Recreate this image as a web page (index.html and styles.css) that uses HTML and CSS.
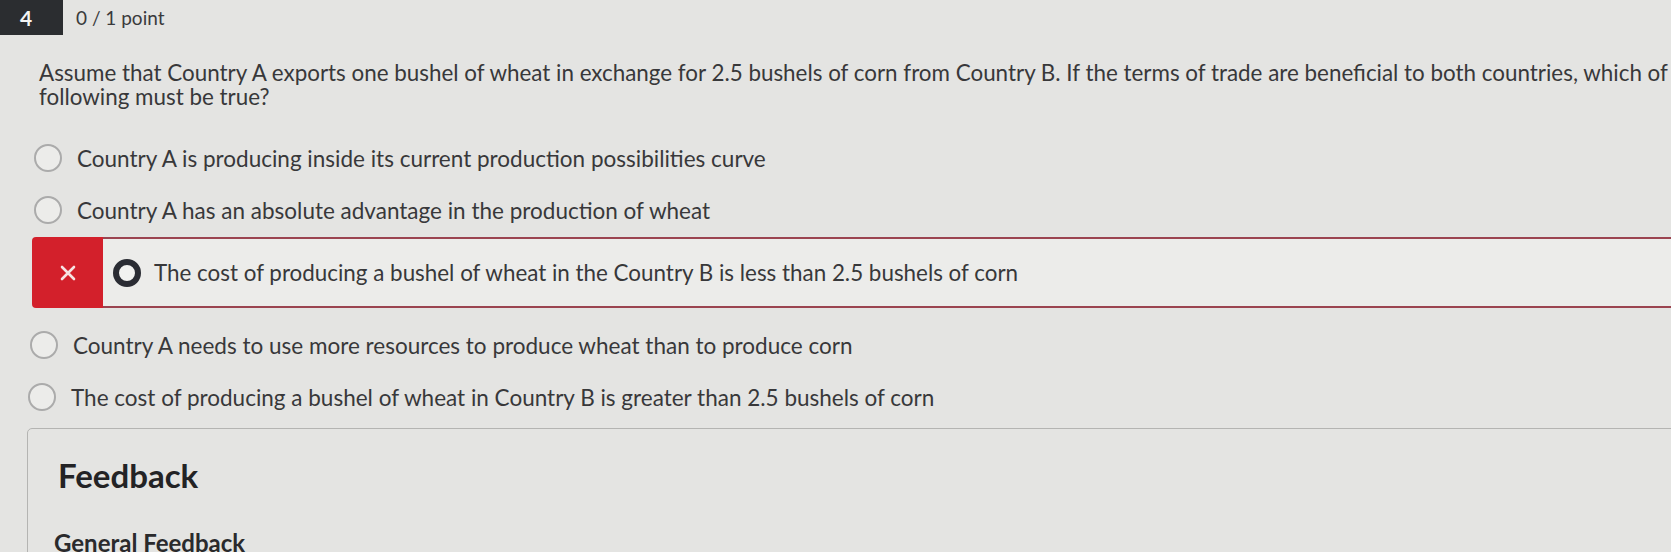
FILE: index.html
```html
<!DOCTYPE html>
<html lang="en">
<head>
<meta charset="utf-8">
<title>Question 4</title>
<link rel="stylesheet" href="styles.css">
</head>
<body>
<div class="page">
  <header class="qhead">
    <div class="qnum">4</div>
    <div class="qpoints">0 / 1 point</div>
  </header>
  <p class="qtext">Assume that Country A exports one bushel of wheat in exchange for 2.5 bushels of corn from Country B. If the terms of trade are beneficial to both countries, which of the following must be true?</p>
  <div class="options">
    <div class="opt opt-1"><span class="radio"></span><span class="label">Country A is producing inside its current production possibilities curve</span></div>
    <div class="opt opt-2"><span class="radio"></span><span class="label">Country A has an absolute advantage in the production of wheat</span></div>
    <div class="opt-wrong">
      <div class="mark"><svg width="16" height="16" viewBox="0 0 16 16"><path d="M2 2 L14 14 M14 2 L2 14" stroke="#f7e3e3" stroke-width="2.6" stroke-linecap="round"/></svg></div>
      <div class="wrong-body"><span class="radio radio-on"></span><span class="label">The cost of producing a bushel of wheat in the Country B is less than 2.5 bushels of corn</span></div>
    </div>
    <div class="opt opt-4"><span class="radio"></span><span class="label">Country A needs to use more resources to produce wheat than to produce corn</span></div>
    <div class="opt opt-5"><span class="radio"></span><span class="label">The cost of producing a bushel of wheat in Country B is greater than 2.5 bushels of corn</span></div>
  </div>
  <section class="feedback">
    <h2 class="fb-title">Feedback</h2>
    <h3 class="fb-sub">General Feedback</h3>
  </section>
</div>
</body>
</html>
```

FILE: styles.css
```css
html, body {
  margin: 0;
  padding: 0;
  background: #e4e4e2;
  overflow: hidden;
}
body {
  width: 1671px;
  height: 552px;
  font-family: Lato, "Open Sans", sans-serif;
  color: #38383a;
}
.page {
  width: 1760px;
}
.qhead {
  display: flex;
  align-items: center;
  height: 35px;
}
.qnum {
  width: 63px;
  height: 35px;
  background: #2b2d30;
  color: #f4f4f4;
  font-weight: 700;
  font-size: 21px;
  line-height: 35px;
  padding-left: 20px;
  box-sizing: border-box;
}
.qpoints {
  margin-left: 13px;
  font-size: 19px;
  color: #3a3a3c;
}
.qtext {
  margin: 26px 0 0 39px;
  width: 1720px;
  font-size: 22.4px;
  line-height: 24px;
  color: #38383a;
}
.options {
  display: flex;
  flex-direction: column;
  margin-top: 24px;
}
.opt {
  display: flex;
  align-items: center;
  height: 50px;
  padding-left: 34px;
  font-size: 22.5px;
}
.opt-2 { margin-top: 2px; }
.opt-4 { margin-top: 12px; padding-left: 30px; }
.opt-5 { margin-top: 2px; padding-left: 28px; }
.radio {
  width: 24px;
  height: 24px;
  border: 2px solid #ababab;
  border-radius: 50%;
  background: #ececea;
  flex: none;
  margin-right: 15px;
}
.radio-on {
  width: 16px;
  height: 16px;
  border: 6px solid #2a2c33;
  background: #f2f2f0;
  margin-right: 13px;
}
.opt-wrong {
  display: flex;
  margin-left: 32px;
  height: 71px;
  margin-top: 2px;
}
.mark {
  width: 71px;
  background: #d3202b;
  border-radius: 4px 0 0 4px;
  display: flex;
  align-items: center;
  justify-content: center;
}
.wrong-body {
  flex: 1;
  display: flex;
  align-items: center;
  border-top: 2px solid #9b4450;
  border-bottom: 2px solid #9b4450;
  background: #ececea;
  padding-left: 10px;
  font-size: 22.4px;
}
.feedback {
  margin: 6px 0 0 27px;
  border: 1px solid #b4b4b2;
  border-radius: 5px;
  padding: 26px 30px;
  height: 300px;
}
.fb-title {
  margin: 0;
  font-size: 33px;
  line-height: 40px;
  font-weight: 700;
  color: #232325;
}
.fb-sub {
  margin: 34px 0 0 -4px;
  font-size: 24px;
  line-height: 28px;
  font-weight: 700;
  color: #2a2a2c;
}
```
